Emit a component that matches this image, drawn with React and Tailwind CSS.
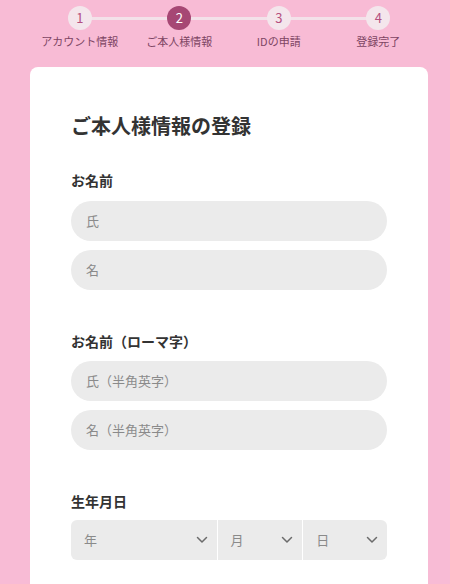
import React from "react";

const steps = [
  { n: "1", label: "アカウント情報" },
  { n: "2", label: "ご本人様情報", active: true },
  { n: "3", label: "IDの申請" },
  { n: "4", label: "登録完了" },
];

const font = { fontFamily: '"Noto Sans CJK JP", "Noto Sans", sans-serif' };

function Chevron() {
  return (
    <svg width="12" height="8" viewBox="0 0 12 8" fill="none" className="shrink-0">
      <path d="M1.5 1.5 L6 6 L10.5 1.5" stroke="#6b6b6b" strokeWidth="1.5" strokeLinecap="round" strokeLinejoin="round" />
    </svg>
  );
}

function Input({ placeholder }) {
  return (
    <div className="h-10 w-full rounded-full bg-[#ebebeb] flex items-center pl-[15px] text-[13px] text-[#8a8a8a]">
      {placeholder}
    </div>
  );
}

function Select({ label }) {
  return (
    <div className="h-10 bg-[#ebebeb] flex items-center justify-between pl-[13px] pr-[9px] text-[13px] text-[#8a8a8a]">
      <span>{label}</span>
      <Chevron />
    </div>
  );
}

export default function App() {
  return (
    <div className="h-[584px] overflow-hidden bg-[#f8bbd5] pl-[30px] pr-[22px] pt-[6px]" style={font}>
      <div className="grid grid-cols-4">
        {steps.map((s, i) => (
          <div key={s.n} className="relative flex flex-col items-center">
            {i < steps.length - 1 && (
              <div className="absolute top-[11px] left-1/2 w-full h-[3px] bg-[#f3e1e9]" />
            )}
            <div
              className={
                s.active
                  ? "relative z-10 w-6 h-6 rounded-full bg-[#a64774] text-white flex items-center justify-center text-[13px]"
                  : "relative z-10 w-6 h-6 rounded-full bg-[#f4e6ec] text-[#b4507f] flex items-center justify-center text-[13px]"
              }
            >
              {s.n}
            </div>
            <div className="mt-[3px] text-[11px] leading-[16px] text-[#7d4563] whitespace-nowrap">{s.label}</div>
          </div>
        ))}
      </div>

      <div className="mt-[18px] bg-white rounded-lg px-[41px] pt-[45px] pb-10">
        <h1 className="text-[20px] leading-[28px] font-bold text-[#333333]">ご本人様情報の登録</h1>

        <div className="mt-[30px] text-[14px] leading-[20px] font-bold text-[#333333]">お名前</div>
        <div className="mt-[11px] flex flex-col gap-[9px]">
          <Input placeholder="氏" />
          <Input placeholder="名" />
        </div>

        <div className="mt-[41px] text-[14px] leading-[20px] font-bold text-[#333333]">お名前（ローマ字）</div>
        <div className="mt-[10px] flex flex-col gap-[9px]">
          <Input placeholder="氏（半角英字）" />
          <Input placeholder="名（半角英字）" />
        </div>

        <div className="mt-[41px] text-[14px] leading-[20px] font-bold text-[#333333]">生年月日</div>
        <div className="mt-[9px] grid grid-cols-[146fr_85fr_84fr] gap-px rounded-md overflow-hidden">
          <Select label="年" />
          <Select label="月" />
          <Select label="日" />
        </div>
      </div>
    </div>
  );
}
